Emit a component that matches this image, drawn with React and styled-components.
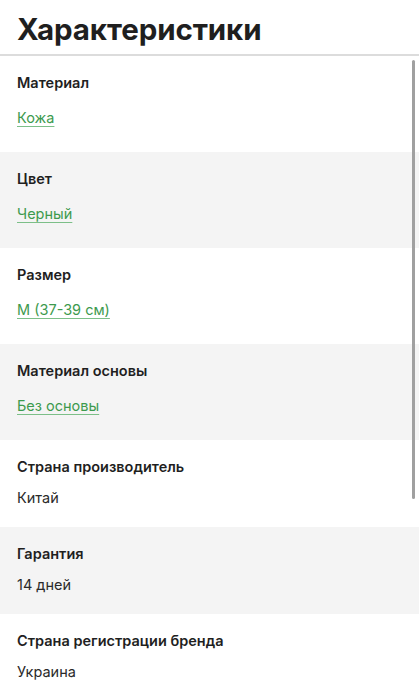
import React from "react";
import styled, { createGlobalStyle } from "styled-components";

const Global = createGlobalStyle`
  html, body { margin: 0; padding: 0; background: #fff; }
  body { font-family: Inter, "Noto Sans", sans-serif; color: #222; -webkit-font-smoothing: antialiased; }
  * { box-sizing: border-box; }
`;

const Page = styled.div`
  width: 419px;
  height: 699px;
  display: flex;
  flex-direction: column;
  overflow: hidden;
  position: relative;
`;

const Header = styled.header`
  height: 56px;
  flex: none;
  padding: 9px 17px 0;
  border-bottom: 2px solid #dcdcdc;
`;

const Title = styled.h1`
  margin: 0;
  font-size: 29.5px;
  line-height: 40px;
  font-weight: 700;
  color: #1f1f1f;
  letter-spacing: -0.1px;
`;

const List = styled.div`
  flex: 1;
  display: flex;
  flex-direction: column;
`;

const Row = styled.div`
  height: ${(p) => (p.$link ? 96 : 87)}px;
  flex: none;
  padding: 17px 17px 0;
  background: ${(p) => (p.$shade ? "#f4f4f4" : "#fff")};
  display: flex;
  flex-direction: column;
  align-items: flex-start;
  gap: ${(p) => (p.$link ? 15 : 11)}px;
`;

const Label = styled.div`
  font-size: 14.5px;
  line-height: 20px;
  font-weight: 600;
  color: #1f1f1f;
`;

const Value = styled.div`
  font-size: 14.5px;
  line-height: 20px;
  font-weight: 400;
  color: #2a2a2a;
`;

const Link = styled.a`
  font-size: 14.5px;
  line-height: 20px;
  color: #3d9a4e;
  text-decoration: underline;
  text-decoration-color: #7cbf88;
  text-underline-offset: 3px;
  cursor: pointer;
`;

const Scrollbar = styled.div`
  position: absolute;
  right: 4px;
  top: 60px;
  width: 3px;
  height: 439px;
  border-radius: 2px;
  background: #a0a0a0;
`;

const items = [
  { label: "Материал", value: "Кожа", link: true },
  { label: "Цвет", value: "Черный", link: true },
  { label: "Размер", value: "M (37-39 см)", link: true },
  { label: "Материал основы", value: "Без основы", link: true },
  { label: "Страна производитель", value: "Китай" },
  { label: "Гарантия", value: "14 дней" },
  { label: "Страна регистрации бренда", value: "Украина" },
];

export default function App() {
  return (
    <Page>
      <Global />
      <Header>
        <Title>Характеристики</Title>
      </Header>
      <List>
        {items.map((it, i) => (
          <Row key={it.label} $link={it.link} $shade={i % 2 === 1}>
            <Label>{it.label}</Label>
            {it.link ? <Link>{it.value}</Link> : <Value>{it.value}</Value>}
          </Row>
        ))}
      </List>
      <Scrollbar />
    </Page>
  );
}
